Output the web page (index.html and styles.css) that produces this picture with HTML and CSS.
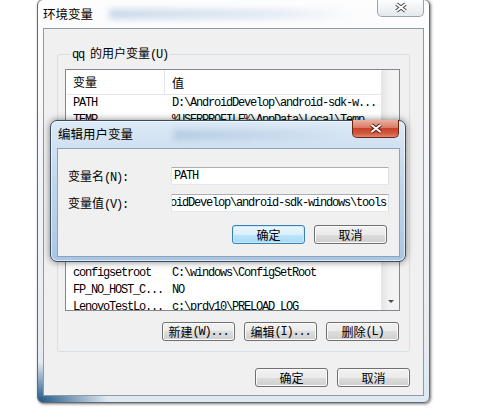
FILE: index.html
```html
<!DOCTYPE html>
<html lang="zh-CN">
<head>
  <meta charset="UTF-8" />
  <title>环境变量</title>
  <link rel="stylesheet" href="styles.css">
</head>
<body>
  <div class="win main-win">
    <div class="titlebar">
      <span class="title">环境变量</span>
      <span class="glass-blur"></span>
      <div class="close-btn">
        <svg width="14" height="11" viewBox="0 0 14 11"><path d="M2.5 2 L11.5 9 M11.5 2 L2.5 9" stroke="#4a4a4a" stroke-width="4"/><path d="M2.5 2 L11.5 9 M11.5 2 L2.5 9" stroke="#fff" stroke-width="2"/></svg>
      </div>
    </div>
    <div class="client">
      <fieldset class="group">
        <legend><span class="mn">qq </span>的用户变量<span class="mn">(U)</span></legend>
        <div class="list">
          <div class="list-main">
            <div class="list-head"><span class="col1">变量</span><span class="col2">值</span></div>
            <div class="row"><span class="col1">PATH</span><span class="col2">D:\AndroidDevelop\android-sdk-w...</span></div>
            <div class="row"><span class="col1">TEMP</span><span class="col2">%USERPROFILE%\AppData\Local\Temp</span></div>
            <div class="row"></div>
            <div class="row"></div>
            <div class="row"></div>
            <div class="row"></div>
            <div class="row"></div>
            <div class="row"></div>
            <div class="row"></div>
            <div class="row"></div>
            <div class="row"><span class="col1">configsetroot</span><span class="col2">C:\windows\ConfigSetRoot</span></div>
            <div class="row"><span class="col1">FP_NO_HOST_C...</span><span class="col2">NO</span></div>
            <div class="row"><span class="col1">LenovoTestLo...</span><span class="col2">c:\prdy10\PRELOAD_LOG</span></div>
          </div>
          <div class="vscroll">
            <div class="vs-track"></div>
            <div class="vs-down"><span class="arrow"></span></div>
          </div>
        </div>
        <div class="btn-row">
          <div class="btn">新建<span class="mn">(W)...</span></div>
          <div class="btn">编辑<span class="mn">(I)...</span></div>
          <div class="btn">删除<span class="mn">(L)</span></div>
        </div>
      </fieldset>
      <div class="btn-row bottom-row">
        <div class="btn">确定</div>
        <div class="btn">取消</div>
      </div>
    </div>
  </div>

  <div class="win edit-win">
    <div class="titlebar">
      <span class="title">编辑用户变量</span>
      <span class="glass-blur"></span>
      <div class="close-btn red">
        <svg width="14" height="11" viewBox="0 0 14 11"><path d="M2.5 2 L11.5 9 M11.5 2 L2.5 9" stroke="#4a1a10" stroke-width="4"/><path d="M2.5 2 L11.5 9 M11.5 2 L2.5 9" stroke="#fff" stroke-width="2"/></svg>
      </div>
    </div>
    <div class="client">
      <div class="edit-form">
        <label class="field-label">变量名<span class="mn">(N):</span></label>
        <div class="field"><span class="field-text">PATH</span></div>
        <label class="field-label">变量值<span class="mn">(V):</span></label>
        <div class="field scrolled"><span class="field-text">D:\AndroidDevelop\android-sdk-windows\tools</span></div>
      </div>
      <div class="btn-row edit-btns">
        <div class="btn default">确定</div>
        <div class="btn">取消</div>
      </div>
    </div>
  </div>
</body>
</html>
```

FILE: styles.css
```css
body {
  margin: 0;
  width: 500px;
  height: 410px;
  position: relative;
  overflow: hidden;
  background-color: #fff;
  font-family: "Noto Sans CJK SC", sans-serif;
  font-size: 12px;
  color: #000;
}
.mn {
  font-family: "Liberation Mono", monospace;
  font-size: 12px;
  letter-spacing: -1.2px;
}
.win {
  position: absolute;
  box-sizing: border-box;
  display: flex;
  flex-direction: column;
}
.main-win {
  left: 37px;
  top: -1px;
  width: 393px;
  height: 404px;
  border: 1px solid #5f6b76;
  border-radius: 6px;
  background:
    radial-gradient(ellipse 70px 40px at 0% 100%, #1f5684 0%, rgba(31,86,132,0) 100%),
    linear-gradient(#fdfdfe, #eef2f6 60%, #dfe8f0);
  box-shadow: 1px 1px 3px rgba(0,0,0,0.55);
}
.titlebar {
  display: flex;
  align-items: flex-start;
  position: relative;
}
.main-win .titlebar {
  height: 28px;
}
.title {
  font-size: 12.5px;
  line-height: 14px;
  padding-top: 7px;
}
.main-win .title {
  padding-left: 5px;
}
.glass-blur {
  flex: 1;
  height: 10px;
  margin: 9px 20px 0 16px;
  background: linear-gradient(90deg, rgba(150,180,210,0.5), rgba(170,195,220,0.35) 60%, rgba(200,215,230,0));
  filter: blur(3px);
}
.close-btn {
  width: 47px;
  height: 18px;
  margin-top: -1px;
  margin-right: 5px;
  box-sizing: border-box;
  border: 1px solid #9aa4ae;
  border-top: none;
  border-radius: 0 0 5px 5px;
  background: linear-gradient(#ffffff, #f1f4f7 50%, #e4e9ee);
  display: flex;
  align-items: center;
  justify-content: center;
}
.close-btn.red {
  border: 1px solid #6b2414;
  border-top: none;
  background: linear-gradient(#eab0a2, #dc7a62 45%, #c8432a 50%, #d25a3e 80%, #e2896e);
  margin-right: 6px;
}
.client {
  flex: 1;
  background-color: #f0f0f0;
  border: 1px solid #8e9ba7;
}
.main-win .client {
  margin: 0 5px 6px 5px;
  padding: 17px 13px 0 13px;
}
.group {
  margin: 0;
  padding: 7px 9px 10px 7px;
  border: 1px solid #d5dfe5;
  border-radius: 3px;
  min-width: 0;
}
.group legend {
  padding: 0 2px;
  margin-left: 5px;
  line-height: 14px;
}
.list {
  height: 242px;
  box-sizing: border-box;
  border: 1px solid #828790;
  background-color: #fff;
  display: flex;
  overflow: hidden;
}
.list-main {
  flex: 1;
  overflow: hidden;
}
.list-head {
  display: flex;
  height: 24px;
  border-bottom: 1px solid #e5e5e5;
  align-items: center;
}
.list-head .col1 {
  border-right: 1px solid #e5e5e5;
  height: 24px;
  line-height: 24px;
}
.row {
  display: flex;
  height: 17px;
  line-height: 17px;
  font-family: "Liberation Mono", monospace;
  font-size: 12px;
  letter-spacing: -1.2px;
  white-space: nowrap;
}
.col1 {
  width: 99px;
  box-sizing: border-box;
  padding-left: 7px;
  overflow: hidden;
}
.col2 {
  flex: 1;
  padding-left: 7px;
  overflow: hidden;
}
.vscroll {
  width: 17px;
  display: flex;
  flex-direction: column;
  border-left: 1px solid #e6e6e6;
  background: linear-gradient(90deg, #e4e4e4, #f2f2f2 40%, #f4f4f4);
}
.vs-track {
  flex: 1;
}
.vs-down {
  height: 17px;
  display: flex;
  align-items: center;
  justify-content: center;
}
.arrow {
  width: 0;
  height: 0;
  border-left: 3px solid transparent;
  border-right: 3px solid transparent;
  border-top: 3px solid #4d4d4d;
}
.btn-row {
  display: flex;
  justify-content: flex-end;
  gap: 9px;
  margin-top: 11px;
  padding-right: 1px;
}
.bottom-row {
  margin-top: 16px;
  padding-right: 0;
}
.btn {
  box-sizing: border-box;
  width: 73px;
  height: 19px;
  border: 1px solid #707070;
  border-radius: 3px;
  background: linear-gradient(#f2f2f2 0%, #ebebeb 50%, #dddddd 50%, #cfcfcf 100%);
  box-shadow: inset 0 0 0 1px #fbfbfb;
  display: flex;
  align-items: center;
  justify-content: center;
  line-height: 14px;
}
.btn.default {
  border-color: #3c7fb1;
  background: linear-gradient(#eaf6fd 0%, #d9f0fc 50%, #bee6fd 50%, #a7d9f5 100%);
  box-shadow: inset 0 0 0 1px #c5ecfc;
}
.edit-win {
  left: 50px;
  top: 120px;
  width: 356px;
  height: 142px;
  border: 1px solid #394b5e;
  border-radius: 7px;
  background: linear-gradient(#dce9f6, #c3d8ee 40%, #aac6e5 100%);
  box-shadow: 0 0 7px rgba(0,0,0,0.5), inset 0 0 0 1px rgba(255,255,255,0.6);
}
.edit-win .titlebar {
  height: 27px;
}
.edit-win .title {
  padding-left: 7px;
  padding-top: 6px;
}
.edit-win .glass-blur {
  margin-left: 40px;
  margin-right: 10px;
}
.edit-win .client {
  margin: 0 5px 4px 6px;
  border-color: #8ba3bd;
}
.edit-form {
  display: grid;
  grid-template-columns: 103px 218px;
  row-gap: 9px;
  padding: 18px 10px 0 10px;
  align-items: center;
}
.field {
  height: 18px;
  box-sizing: border-box;
  background-color: #fff;
  border: 1px solid;
  border-color: #abadb3 #dbdfe6 #e3e9ef #e2e3ea;
  display: flex;
  align-items: center;
  overflow: hidden;
  white-space: nowrap;
  padding: 0 2px;
  font-family: "Liberation Mono", monospace;
  font-size: 12px;
  letter-spacing: -1.2px;
}
.field.scrolled {
  justify-content: flex-end;
}
.field-text {
  flex-shrink: 0;
}
.edit-btns {
  margin-top: 13px;
  padding-right: 12px;
}
```
